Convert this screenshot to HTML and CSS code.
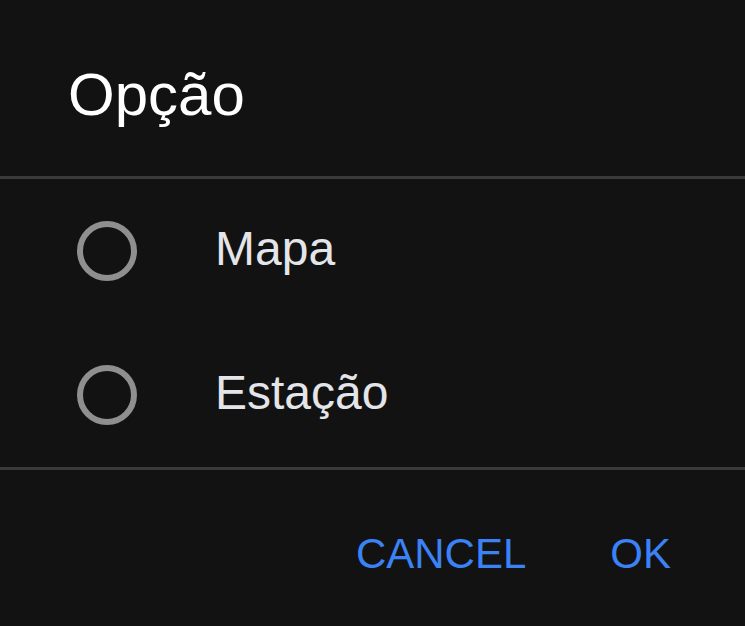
FILE: index.html
```html
<!DOCTYPE html>
<html lang="pt">
<head>
<meta charset="utf-8">
<title>Opção</title>
<link rel="stylesheet" href="styles.css">
</head>
<body>
<div class="dialog">
  <div class="header">
    <h1 class="title">Opção</h1>
  </div>
  <div class="divider"></div>
  <ul class="options">
    <li class="option">
      <span class="radio"></span>
      <span class="label">Mapa</span>
    </li>
    <li class="option">
      <span class="radio"></span>
      <span class="label">Estação</span>
    </li>
  </ul>
  <div class="divider"></div>
  <div class="actions">
    <span class="btn">CANCEL</span>
    <span class="btn">OK</span>
  </div>
</div>
</body>
</html>
```

FILE: styles.css
```css
html, body {
  margin: 0;
  padding: 0;
  background: #121212;
}
body {
  font-family: "Liberation Sans", Arial, sans-serif;
  width: 745px;
  height: 626px;
  overflow: hidden;
}
.dialog {
  display: flex;
  flex-direction: column;
}
.header {
  height: 176px;
  box-sizing: border-box;
  padding: 65px 0 0 68px;
}
.title {
  margin: 0;
  font-size: 60px;
  line-height: 1;
  font-weight: 400;
  color: #ffffff;
}
.divider {
  height: 3px;
  background: #3a3a3a;
}
.options {
  list-style: none;
  margin: 0;
  padding: 0;
}
.option {
  height: 144px;
  display: flex;
  align-items: center;
  padding-left: 77px;
}
.radio {
  width: 60px;
  height: 60px;
  box-sizing: border-box;
  border: 6px solid #8f8f8f;
  border-radius: 50%;
  flex: none;
}
.label {
  margin-left: 78px;
  font-size: 48px;
  line-height: 1;
  color: #e3e5e8;
  padding-bottom: 4px;
}
.actions {
  display: flex;
  justify-content: flex-end;
  gap: 84px;
  padding: 63px 74px 0 0;
}
.btn {
  font-size: 42px;
  line-height: 1;
  color: #3b82f6;
}
```
